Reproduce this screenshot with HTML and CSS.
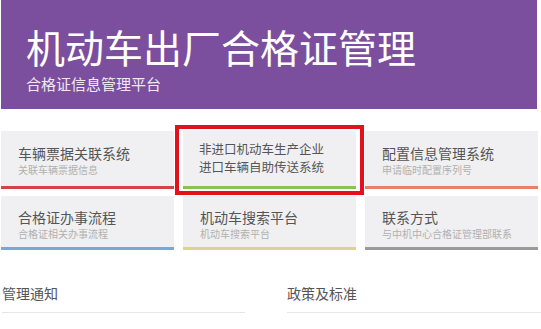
FILE: index.html
```html
<!DOCTYPE html>
<html lang="zh-CN">
<head>
    <meta charset="UTF-8">
    <meta name="viewport" content="width=device-width, initial-scale=1.0">
    <title>机动车出厂合格证管理</title>
    <link rel="stylesheet" href="styles.css">
</head>
<body>
    <header class="banner">
        <h1>机动车出厂合格证管理</h1>
        <p>合格证信息管理平台</p>
    </header>

    <div class="cards">
        <div class="card red">
            <div class="card-title">车辆票据关联系统</div>
            <div class="card-sub">关联车辆票据信息</div>
        </div>
        <div class="card green">
            <div class="card-line">非进口机动车生产企业</div>
            <div class="card-line">进口车辆自助传送系统</div>
        </div>
        <div class="card salmon">
            <div class="card-title">配置信息管理系统</div>
            <div class="card-sub">申请临时配置序列号</div>
        </div>
        <div class="card blue">
            <div class="card-title">合格证办事流程</div>
            <div class="card-sub">合格证相关办事流程</div>
        </div>
        <div class="card yellow">
            <div class="card-title">机动车搜索平台</div>
            <div class="card-sub">机动车搜索平台</div>
        </div>
        <div class="card gray">
            <div class="card-title">联系方式</div>
            <div class="card-sub">与中机中心合格证管理部联系</div>
        </div>
    </div>

    <div class="highlight-box"></div>

    <div class="news">
        <div class="news-col left">管理通知</div>
        <div class="news-col right">政策及标准</div>
    </div>
</body>
</html>
```

FILE: styles.css
```css
body {
    margin: 0;
    font-family: "Noto Sans CJK SC", "Noto Sans", sans-serif;
    background-color: #fff;
    color: #555;
    position: relative;
    width: 541px;
    height: 329px;
    overflow: hidden;
}

.banner {
    margin-left: 1px;
    width: 511px;
    height: 109px;
    padding-left: 25px;
    background-color: #7b4f9d;
    color: #fff;
}

.banner h1 {
    margin: 0;
    padding-top: 24px;
    font-size: 39px;
    font-weight: 400;
    line-height: 44px;
}

.banner p {
    margin: 6px 0 0;
    font-size: 15px;
    line-height: 20px;
    color: #f0e8f5;
}

.cards {
    display: grid;
    grid-template-columns: 173px 173px 173px;
    column-gap: 9px;
    row-gap: 7px;
    margin-top: 22px;
    padding-left: 1px;
}

.card {
    height: 58px;
    background-color: #f0f0f2;
    border-bottom: 3px solid #ccc;
    padding: 12px 0 0 17px;
    box-sizing: border-box;
}

.card-title {
    font-size: 14px;
    line-height: 20px;
    color: #555;
}

.card-sub {
    font-size: 10px;
    line-height: 14px;
    color: #b0b0b0;
}

.card-line {
    font-size: 12.5px;
    line-height: 18px;
    color: #555;
}

.green { padding-top: 9px; padding-left: 16px; }
.blue, .yellow, .gray { height: 54px; padding-top: 11px; }

.red { border-bottom-color: #d8404a; }
.green { border-bottom-color: #8cc152; }
.salmon { border-bottom-color: #ec7f6a; }
.blue { border-bottom-color: #74a9dc; }
.yellow { border-bottom-color: #dcd48e; }
.gray { border-bottom-color: #9a9a9a; }

.highlight-box {
    position: absolute;
    left: 175px;
    top: 125px;
    width: 189px;
    height: 70px;
    border: 4px solid #e2111b;
    box-sizing: border-box;
}

.news {
    display: flex;
    gap: 42px;
    margin-top: 33px;
    padding-left: 2px;
}

.news-col {
    font-size: 14px;
    line-height: 20px;
    color: #555;
    padding-bottom: 9px;
    border-bottom: 1px solid #e6e6ea;
}

.news-col.left { width: 243px; }
.news-col.right { width: 254px; }
```
